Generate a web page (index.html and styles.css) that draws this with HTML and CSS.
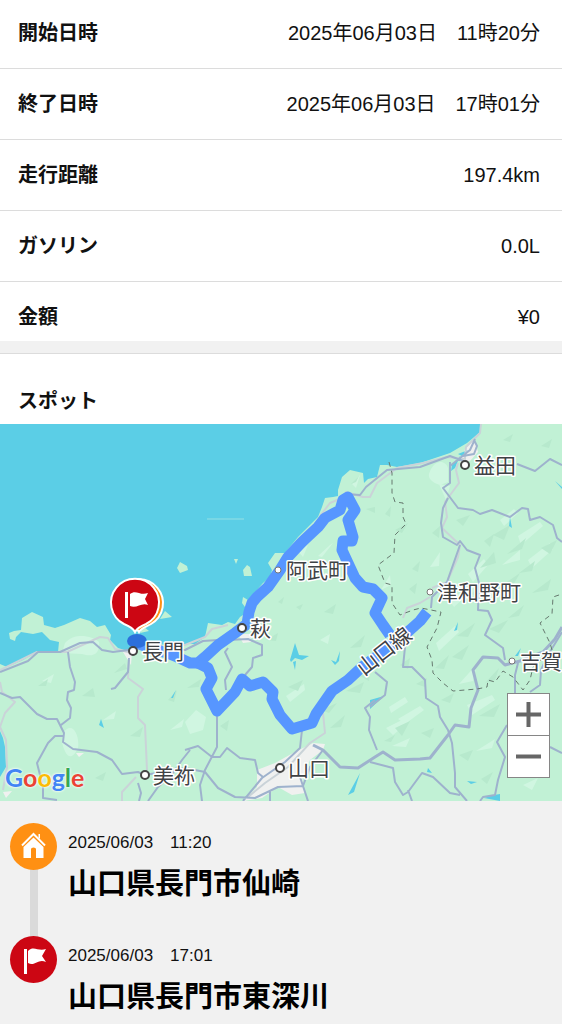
FILE: index.html
```html
<!DOCTYPE html>
<html lang="ja">

<head>
    <meta charset="UTF-8">
    <meta name="viewport" content="width=device-width, initial-scale=1.0">
    <title>走行履歴</title>
    <link rel="stylesheet" href="styles.css">
</head>

<body>
    <dl class="summary">
        <div class="row">
            <dt>開始日時</dt>
            <dd>2025年06月03日　11時20分</dd>
        </div>
        <div class="row">
            <dt>終了日時</dt>
            <dd>2025年06月03日　17時01分</dd>
        </div>
        <div class="row">
            <dt>走行距離</dt>
            <dd>197.4km</dd>
        </div>
        <div class="row">
            <dt>ガソリン</dt>
            <dd>0.0L</dd>
        </div>
        <div class="row">
            <dt>金額</dt>
            <dd>¥0</dd>
        </div>
    </dl>

    <section class="spot">
        <h2 class="spot-title">スポット</h2>

        <div class="map">
            <svg class="map-canvas" viewBox="0 424 562 377" preserveAspectRatio="xMidYMid slice">
                <rect class="sea" x="0" y="424" width="562" height="377" />

                <!-- land and islands -->
                <path class="land" d="M0 664L7 667 23 660 35 653 58 652 59 642 50 640 42 632 33 634 21 632 16 637 15 641 10 639 9 633 14 631 21 630 22 618 32 612 43 617 44 625 55 628 64 625 80 618 90 621 97 627 105 625 111 635 110 640 118 648 128 651 132 646 150 641 168 646 185 644 195 644 205 637 208 623 222 625 228 622 235 624 240 617 246 613 245 607 242 603 243 597 248 600 263 583 270 577 272 570 268 563 275 553 285 553 298 537 318 517 322 507 325 498 333 497 338 496 338 490 342 477 350 470 363 473 364 483 368 479 377 477 380 465 387 465 397 467 420 463 450 453 467 443 480 432 481 424 562 424 562 801 0 801Z" />
                <path class="land" d="M180 562L187 566 188 570 180 573 177 568ZM165 611L172 617 160 619ZM143 626L149 631 140 633ZM234 559L238 559 236 564ZM243 570L247 565 250 567 252 576 244 576Z" />
                <path class="land-line" d="M207 519H244" />

                <!-- terrain shading -->
                <path class="hill-light" d="M65 643C75 632 92 636 99 642C100 652 95 658 82 654L62 653ZM63 733C72 720 80 735 78 748C70 765 64 752 62 742ZM429 474C434 458 446 460 448 468L448 482 440 485C434 483 428 480 429 474ZM439 484L450 486 446 500ZM185 722L196 710 206 717 203 730 190 734ZM318 556L330 545 333 543 322 557ZM352 484L360 475 356 488ZM389 707L405 697 408 702 391 713ZM398 719L420 706 424 710 405 724ZM467 705L492 695 495 700 472 715ZM386 728L406 718 409 722 393 735ZM500 520L514 509 518 513 504 526ZM518 536L540 522 543 526 521 545ZM528 560L550 543 553 549 532 568ZM468 574L484 559 488 565 473 582ZM502 565L520 550 520 560ZM450 601L464 590 466 596 454 607ZM436 643L455 626 459 632 439 651ZM459 684L477 664 473 681ZM534 704L544 696 546 702ZM286 696L304 684 305 690 290 702ZM320 640L330 634 328 644ZM298 551L308 545 303 557ZM42 681L54 674 51 683ZM103 720L116 711 114 719ZM170 730L184 719 182 727ZM430 567L440 552 439 566ZM381 590L390 575 391 585ZM476 751L495 739 492 748ZM392 746L410 738 406 747ZM523 785L538 778 532 790Z" />
                <path class="hill" d="M38 686L48 679 46 686ZM82 696L93 688 95 697ZM114 673L125 663 127 669ZM130 736L143 727 140 737ZM168 700L177 690 174 702ZM187 688L201 679 199 687ZM266 640L278 633 276 641ZM288 687L303 680 298 691ZM321 710L337 703 329 713ZM330 728L345 715 341 727ZM346 691L364 682 360 693ZM360 676L370 670 369 681ZM296 607L303 604 300 610ZM278 602L284 597 282 604ZM366 509L375 507 375 513ZM351 484L359 476 356 482ZM385 514L391 506 390 517ZM456 520L470 515 463 526ZM395 530L408 523 402 533ZM432 533L440 526 439 538ZM493 535L510 525 504 540ZM484 541L494 534 490 547ZM507 554L526 538 522 549ZM480 568L494 552 496 563ZM519 573L535 561 532 571ZM498 588L520 573 512 587ZM532 593L551 579 548 590ZM541 548L557 540 550 554ZM471 594L483 583 479 597ZM508 618L524 605 519 616ZM489 629L508 620 499 633ZM457 636L475 623 468 637ZM435 668L449 655 444 669ZM452 657L469 645 462 660ZM400 665L410 658 408 669ZM416 684L427 678 425 687ZM485 683L499 668 495 680ZM479 716L500 704 494 717ZM441 700L454 693 450 703ZM421 733L434 728 430 738ZM395 728L410 721 402 736ZM459 755L473 750 468 761ZM481 779L493 772 487 784ZM384 741L395 735 391 742ZM528 752L545 743 540 754ZM220 726L229 720 227 731ZM95 778L106 772 103 781ZM350 648L365 635 361 647ZM324 612L336 604 333 614ZM541 446L552 439 549 448ZM503 440L513 434 510 442ZM412 569L420 561 418 572ZM409 589L417 583 415 594Z" />
                <path class="town" d="M257 770L275 763 295 752 313 743 325 744 323 750 310 760 302 777 305 793 292 795 278 787 262 798 243 801 257 787ZM466 446L475 440 478 452 470 461 460 463ZM123 652L132 652 131 665ZM238 634L250 634 251 642 243 643ZM76 753L84 753 79 757ZM3 792L12 791 6 798Z" />
                <path class="sea" d="M0 731L3 738 5 747 6 767 0 777ZM290 660L295 643 299 655 309 656 302 660 295 658 291 662ZM293 662L296 661 295 670ZM331 660L336 662 340 651 339 661 335 665ZM101 719L104 728 99 725ZM171 698L176 690 173 698ZM454 631L458 622 457 630ZM515 656L521 648 518 656ZM510 517L512 528 509 526ZM370 700L384 696 370 709ZM348 795L360 773 354 792ZM467 781L477 782 471 784ZM494 795L500 794 500 801 484 798ZM555 481L562 487 562 489ZM428 768L432 773 427 772ZM452 465L460 456 455 468 451 471ZM458 454L468 450 462 456Z" />

                <!-- roads -->
                <path class="rail" d="M0 670L37 652 67 652 100 637 108 638 115 649 128 652M129 660L128 678 143 689 138 697 138 718 145 725 147 770M136 777L122 792 122 801M0 682L2 692 15 702 5 713 0 727 6 740 7 767 3 790M148 653L168 644 185 645 205 637 212 629 228 625M248 797L265 783 288 767 310 743 325 733 323 713M320 516L330 503 342 498M345 492L363 497 370 497 377 483 397 468 423 463 447 457 466 459M465 458L466 447 480 433 481 424M458 463L456 470 459 483 445 502 447 517 442 528 460 545 458 557 447 582 432 588M430 597L420 603 407 608 403 618" />
                <path class="road" d="M0 672L28 661 38 652 60 652 80 643 93 642 102 650 113 652 128 650M68 652L70 667 75 682 74 690 68 692 67 700 71 708 70 718 61 725M0 693L12 698 20 697 37 714 47 719 57 719 64 733 63 742 73 749 97 752 112 760 122 774 138 772 145 775M63 736L55 736 48 743 37 763 43 787 43 798 57 800M111 689L115 688 128 672 129 658M138 783L141 793 139 801M148 801L158 787 173 773 182 760 190 750M160 650L185 650 203 641 218 640M228 640L248 639 262 645 262 655 253 658 252 667 245 675M228 648L225 652 232 667 225 680 226 690M217 715L217 747 205 770 200 785 202 801M185 750L198 746 212 757 220 757 227 748 240 758 255 760 258 773 263 777M145 775L185 768 205 772 218 788 235 797 255 798 278 787 303 786 310 767 323 750M243 801L262 778 285 762 300 748 302 730M300 777L308 801M270 790V801M375 700L365 708 370 717 369 730 377 750M345 494L360 495 366 487 387 470 420 467 450 456 466 462M450 462L450 483 443 488 458 508 473 510 480 514 492 510 510 517 522 508 528 509 530 520 540 517 553 525 557 538 562 542M448 498L443 508 441 523 443 537 457 545 460 541 467 550 480 555 475 568 479 583 478 610 488 611 492 620 485 635 503 648 505 660M517 464L535 471 550 459 562 465M460 545L447 582 432 597 431 608M450 466L470 450 475 439M463 456L474 454 477 446 474 440M405 647L403 667 412 667 425 680 426 698 438 706 440 717 448 730 452 743 455 773 455 787 467 801M370 762L393 768 395 782 403 795 408 792 422 773 433 777 450 793 460 795M408 790L412 801M375 672L387 682 385 695 370 707M507 725L497 742 505 757 498 780 495 795 483 797 480 801M518 663L515 675 515 693M562 632L548 655 541 670 540 685 530 692M550 747L562 753" />
                <path class="road highway" d="M313 745L323 750 340 767 358 768 375 757 383 752 395 760 420 759 430 758 448 735 455 725 469 727 471 708 478 690 473 670 483 657 498 658 505 665 520 661 543 652 555 639 562 627" />
                <path class="border" d="M389 462L392 473 392 493 395 502 403 503 403 517 406 524 395 535 394 553 378 565 385 583 392 585 392 603 400 615 413 610 421 608 441 612 437 628 427 647 432 660 433 673 443 683 453 691 477 689 487 687 488 680 495 682 503 671 513 677 523 690 530 680 533 667 552 650 550 643 540 623 552 614 553 597 562 594" />

                <!-- driven route -->
                <path class="route" d="M137 643L150 648 167 653 177 657 190 663 198 663 205 657 218 645 235 633 247 624 249 612 252 603 257 597 268 587 280 570 288 557 302 542 318 527 325 518 340 510 343 500 348 497 355 510 348 520 353 537 352 541 343 541 342 550 348 563 355 578 363 587 373 589 382 598 375 613 383 625 390 635" />
                <path class="route" d="M198 663L208 668 212 678 206 689 217 711 235 692 242 679 250 686 263 682 273 692 272 699 280 715 292 729 312 723 316 714 332 691 348 680 362 667 383 652 410 630 420 621 427 612" />
                <ellipse class="here" cx="137" cy="641" rx="10" ry="7" />

                <g class="town-dot">
                    <circle cx="133" cy="651" r="4" />
                    <circle cx="242" cy="628" r="4" />
                    <circle cx="465" cy="465" r="4" />
                    <circle cx="280" cy="768" r="4" />
                    <circle cx="145" cy="775" r="4" />
                </g>
                <g class="town-dot small">
                    <circle cx="278" cy="570" r="3" />
                    <circle cx="430" cy="592" r="3" />
                    <circle cx="512" cy="661" r="3" />
                </g>

                <g class="place">
                    <text x="142" y="659">長門</text>
                    <text x="250" y="636">萩</text>
                    <text x="286" y="578">阿武町</text>
                    <text x="474" y="473">益田</text>
                    <text x="437" y="600">津和野町</text>
                    <text x="520" y="669">吉賀</text>
                    <text x="288" y="776">山口</text>
                    <text x="153" y="783">美祢</text>
                    <text x="353" y="659" transform="rotate(-38 384 652)">山口線</text>
                </g>

                <!-- start pin sits behind the goal pin -->
                <path class="pin pin-start" d="M139 632C137 628 132 627 127 624A24 24 0 1 1 151 624C146 627 141 628 139 632Z" />
                <path class="pin pin-goal" d="M135 632C133 628 129 626 124 624A24 24 0 1 1 146 624C141 626 137 628 135 632Z" />
                <path class="pin-flag" d="M125 592H128V618H125ZM130 594C136 589 140 596 148 593L145 599 148 605C141 602 137 609 130 606Z" />
            </svg>

            <div class="google"><span class="g-blue">G</span><span class="g-red">o</span><span class="g-yellow">o</span><span class="g-blue">g</span><span class="g-green">l</span><span class="g-red">e</span></div>

            <div class="zoom">
                <button type="button" class="zoom-button" aria-label="拡大">
                    <svg width="25" height="25" viewBox="0 0 25 25"><path d="M0 12.5H25M12.5 0V25" /></svg>
                </button>
                <button type="button" class="zoom-button" aria-label="縮小">
                    <svg width="25" height="25" viewBox="0 0 25 25"><path d="M0 12.5H25" /></svg>
                </button>
            </div>
        </div>
    </section>

    <ol class="timeline">
        <li class="stop">
            <span class="stop-icon start">
                <svg width="47" height="47" viewBox="0 0 47 47">
                    <path d="M23.500 14.500L33.500 24V35H26V26Q26 24.500 23.500 24.500Q21 24.500 21 26V35H13.500V24Z" />
                    <path class="roof" d="M12 22.500L23.500 11 35 22.500" />
                    <path d="M28.500 11H30V16L28.500 14.500Z" />
                </svg>
            </span>
            <div class="stop-body">
                <p class="stop-time">2025/06/03　11:20</p>
                <p class="stop-name">山口県長門市仙崎</p>
            </div>
        </li>
        <li class="stop">
            <span class="stop-icon goal">
                <svg width="47" height="47" viewBox="0 0 47 47">
                    <path d="M14 13H17V38H14ZM18 15C24 9 28 16 36 13L32 20 36 26C28 22 25 31 18 27Z" />
                </svg>
            </span>
            <div class="stop-body">
                <p class="stop-time">2025/06/03　17:01</p>
                <p class="stop-name">山口県長門市東深川</p>
            </div>
        </li>
    </ol>
</body>

</html>
```

FILE: styles.css
```css
body {
    margin: 0;
    background-color: #f1f1f1;
    color: #111;
    font-family: "Liberation Sans", "Noto Sans CJK JP", sans-serif;
    font-size: 20px;
    line-height: 30px;
}

.summary {
    margin: 0;
    padding-bottom: 9px;
    background-color: #fff;
}

.row {
    display: flex;
    justify-content: space-between;
    padding: 20px 22px 20px 18px;
    border-bottom: 1px solid #dcdcdc;
}

.row:first-child {
    padding-top: 18px;
}

.row:last-child {
    padding-bottom: 0;
    border-bottom: none;
}

.row dt {
    font-weight: bold;
}

.row dd {
    margin: 0;
}

.spot {
    margin-top: 12px;
    border-top: 1px solid #dcdcdc;
    background-color: #fff;
}

.spot-title {
    margin: 0;
    padding: 32px 18px 8px;
    font-size: 20px;
}

/* map */
.map {
    position: relative;
    height: 377px;
    overflow: hidden;
}

.map-canvas {
    display: block;
    width: 100%;
    height: 100%;
}

.sea {
    fill: #5bcee6;
}

.land {
    fill: #c1f1d5;
}

.land-line {
    stroke: #96e0e4;
}

.hill {
    fill: #b7e9cd;
}

.hill-light {
    fill: #d0f6e1;
}

.town {
    fill: #f0f1f0;
}

.rail,
.road,
.border,
.route {
    fill: none;
    stroke-linejoin: round;
}

.rail {
    stroke: #cad3d8;
    stroke-width: 2;
}

.road {
    stroke: #9eb2cd;
    stroke-width: 2;
}

.highway {
    stroke-width: 3;
}

.border {
    stroke: #66796f;
    stroke-width: 1;
    stroke-dasharray: 5 4;
}

.route {
    stroke: #5796ff;
    stroke-width: 11;
}

.here {
    fill: #2c6fdb;
}

.town-dot {
    fill: #fff;
    stroke: #444;
    stroke-width: 2;
}

.small {
    stroke: #777;
    stroke-width: 1;
}

.place {
    font-family: "Noto Sans CJK JP", sans-serif;
    font-size: 21px;
    fill: #3f4245;
    stroke: #fff;
    stroke-width: 3;
    stroke-linejoin: round;
    paint-order: stroke;
}

.pin {
    stroke: #fff;
    stroke-width: 2;
}

.pin-start {
    fill: #ff9013;
}

.pin-goal {
    fill: #cc0613;
}

.pin-flag {
    fill: #fff;
}

.google {
    position: absolute;
    left: 5px;
    bottom: 9px;
    font-family: Lato, sans-serif;
    font-size: 25px;
    font-weight: bold;
    text-shadow: 0 0 2px #fff, 0 0 3px #fff;
}

.g-blue {
    color: #4285f4;
}

.g-red {
    color: #ea4335;
}

.g-yellow {
    color: #fbbc04;
}

.g-green {
    color: #34a853;
}

.zoom {
    position: absolute;
    right: 12px;
    bottom: 23px;
    display: flex;
    flex-direction: column;
    gap: 1px;
    border: 1px solid #868686;
    background-color: #868686;
}

.zoom-button {
    display: flex;
    align-items: center;
    justify-content: center;
    width: 41px;
    height: 41px;
    padding: 0;
    border: none;
    background-color: #fff;
    cursor: pointer;
}

.zoom-button path {
    stroke: #666;
    stroke-width: 4;
}

/* timeline */
.timeline {
    margin: 0;
    padding: 22px 10px 0;
    list-style: none;
}

.stop {
    position: relative;
    display: flex;
    gap: 11px;
    padding-bottom: 10px;
}

/* bar between two stops */
.stop:not(:last-child)::before {
    content: "";
    position: absolute;
    top: 24px;
    bottom: -24px;
    left: 20px;
    width: 8px;
    background-color: #dadada;
}

.stop:not(:last-child) {
    padding-bottom: 32px;
}

.stop-icon {
    position: relative;
    width: 47px;
    height: 47px;
    border-radius: 50%;
}

.stop-icon svg {
    display: block;
    fill: #fff;
}

.stop-icon .roof {
    fill: none;
    stroke: #fff;
    stroke-width: 2;
}

.start {
    background-color: #ff9013;
}

.goal {
    background-color: #cc0613;
}

.stop-body {
    padding-top: 8px;
}

.stop-time {
    margin: 0 0 9px;
    font-size: 17px;
    line-height: 24px;
}

.stop-name {
    margin: 0;
    color: #000;
    font-size: 29px;
    font-weight: bold;
    line-height: 40px;
}
```
